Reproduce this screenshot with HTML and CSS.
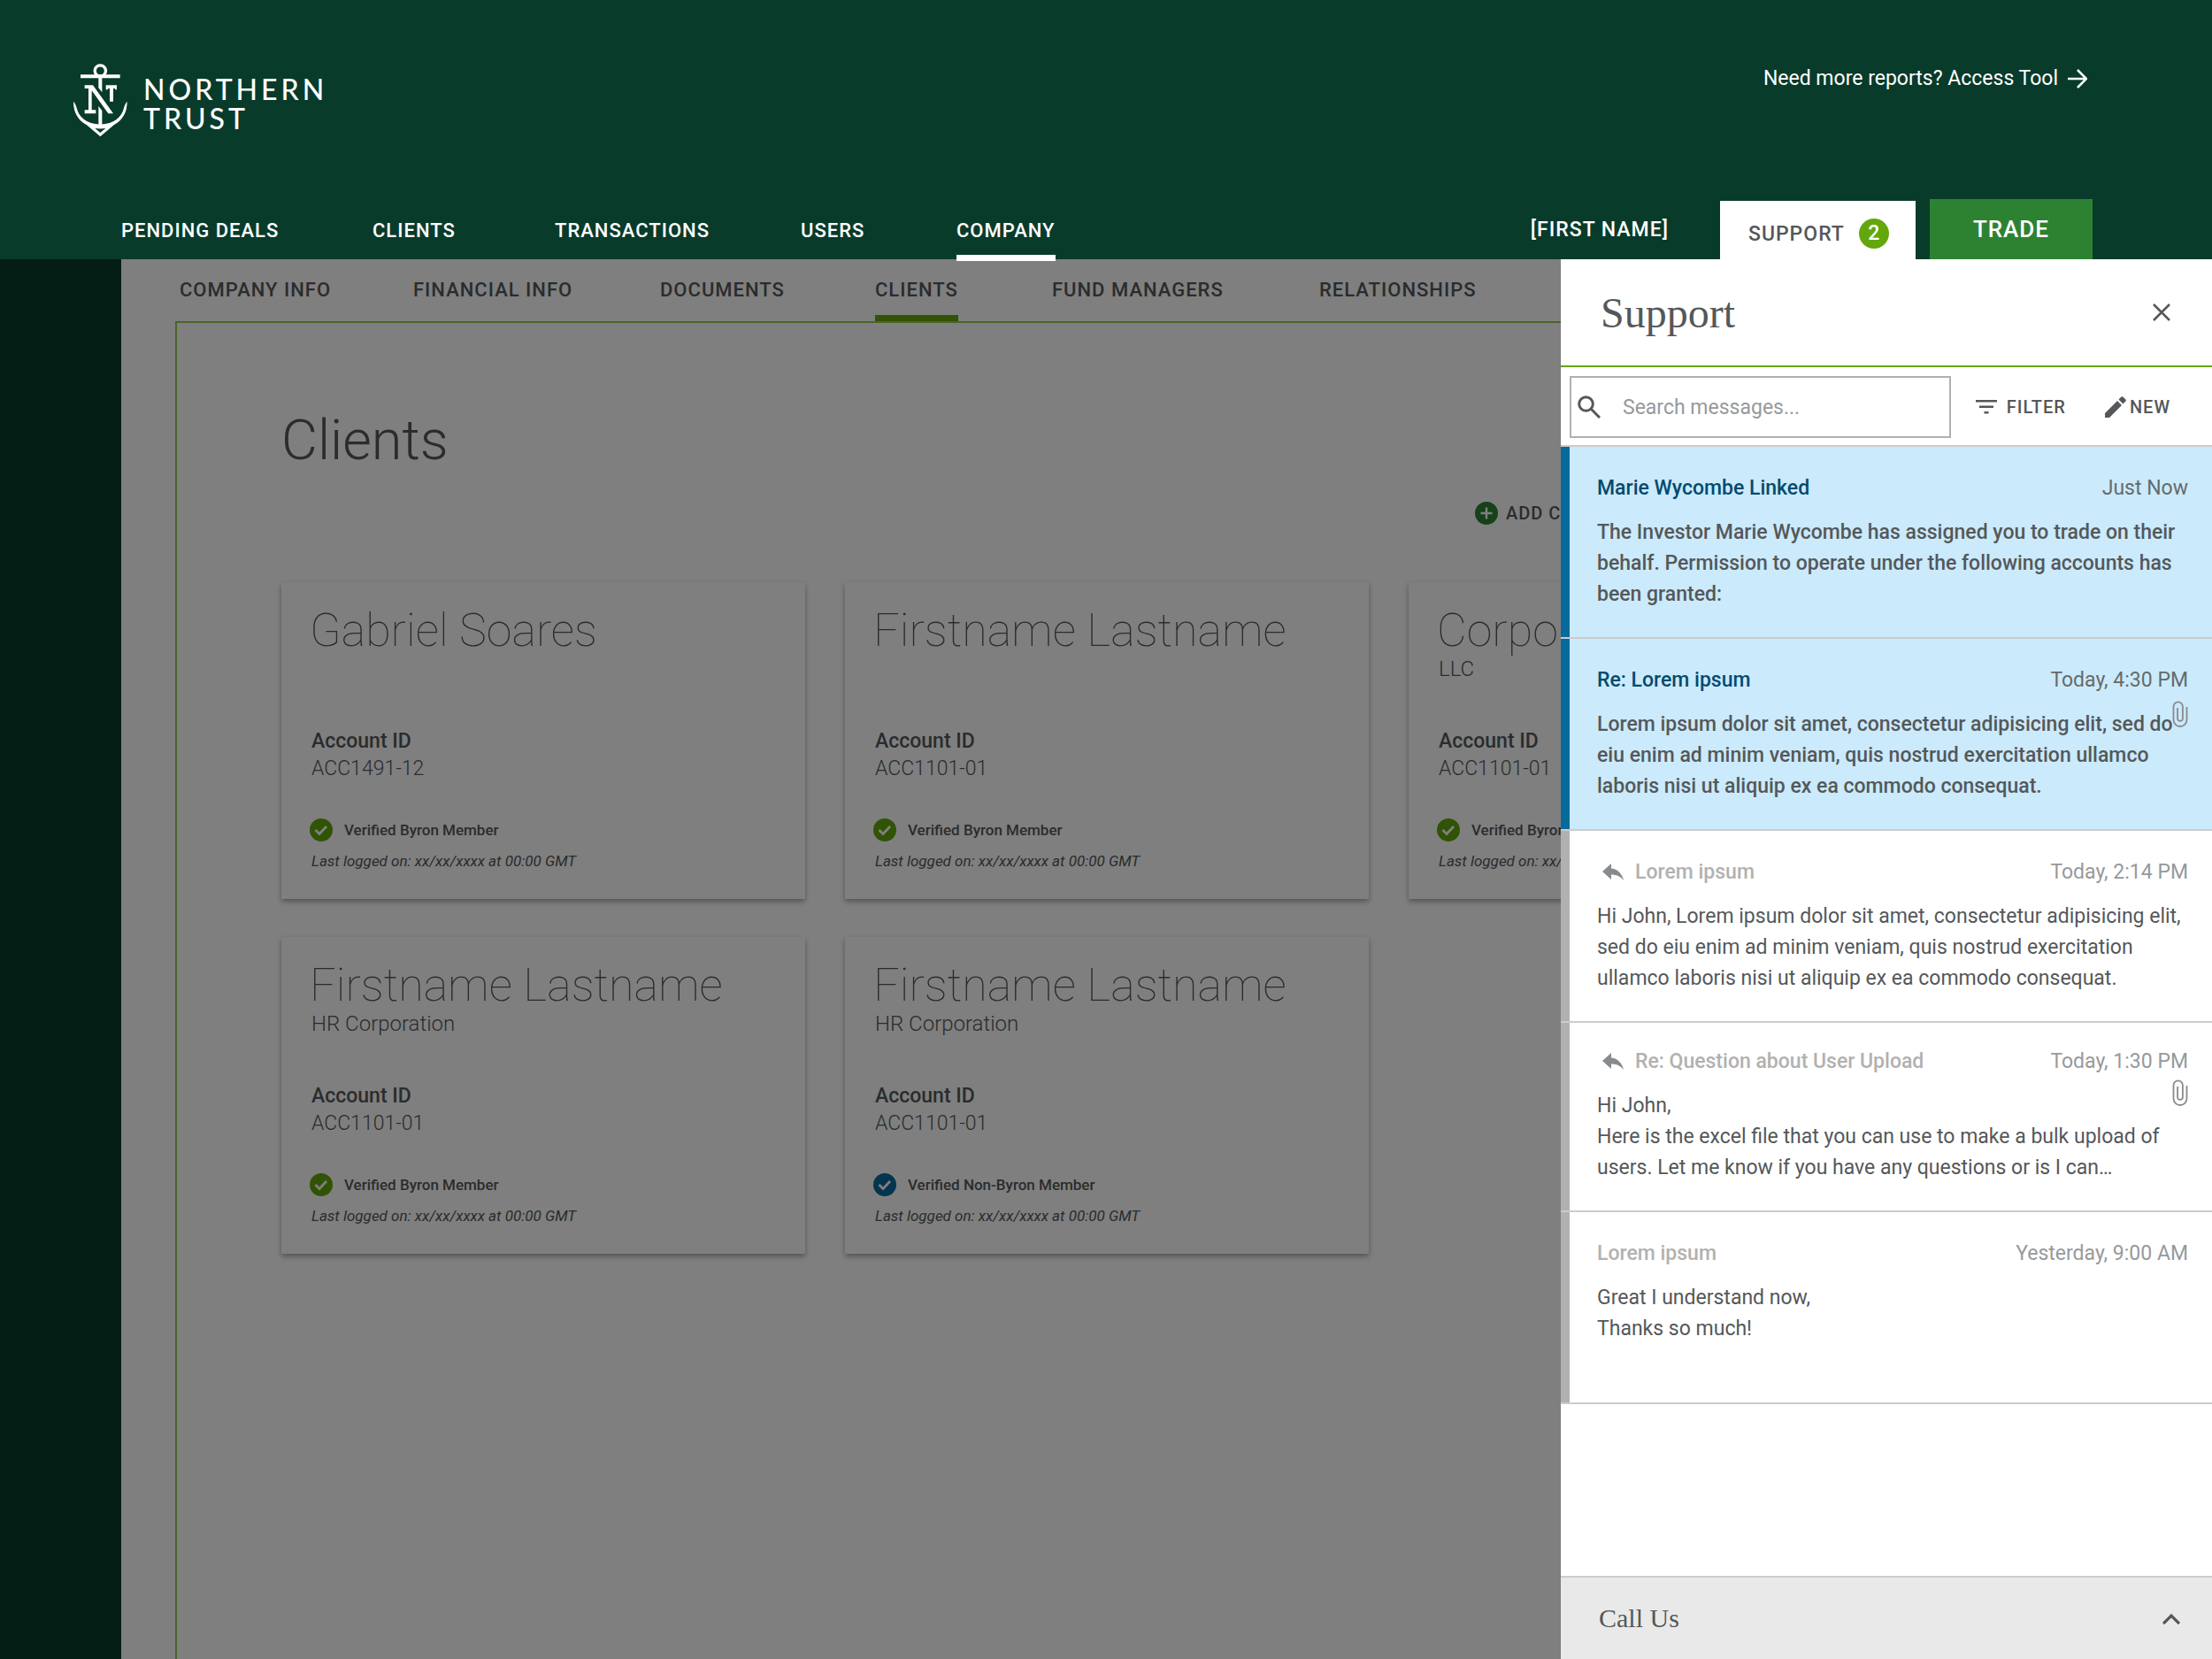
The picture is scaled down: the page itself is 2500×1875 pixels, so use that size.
FILE: index.html
```html
<!DOCTYPE html>
<html lang="en">
<head>
    <meta charset="UTF-8">
    <meta name="viewport" content="width=device-width, initial-scale=1.0">
    <title>Northern Trust - Clients</title>
    <link rel="stylesheet" href="styles.css">
</head>
<body>
    <!-- Shared icons -->
    <svg class="sprite" aria-hidden="true">
        <symbol id="icon-check" viewBox="0 0 26 26">
            <circle cx="13" cy="13" r="13" />
            <path d="M6.500 13l4.500 4.500 8-8.500" fill="none" stroke="#fff" stroke-width="2.800" />
        </symbol>
        <symbol id="icon-clip" viewBox="0 0 18 30">
            <path d="M16.500 7v14.500a7.500 7.500 0 0 1-15 0V6.500a5.200 5.200 0 0 1 10.400 0V20a2.900 2.900 0 0 1-5.800 0V8" fill="none" stroke="currentColor" stroke-width="1.800" />
        </symbol>
        <symbol id="icon-reply" viewBox="0 0 24 20">
            <path d="M10 5.500V0L0 9l10 9v-5.500c6 0 10.500 2 14 6.500-1.500-6.500-5.500-12.500-14-13.500z" fill="currentColor" />
        </symbol>
    </svg>

    <header class="header">
        <div class="header-top">
            <a class="logo" href="#">
                <svg class="logo-mark" viewBox="66 62 186 252" fill="#fff" aria-hidden="true">
                    <circle cx="160" cy="89" r="18.500" fill="none" stroke="#fff" stroke-width="10" />
                    <path d="M93 102h134v12H93z" />
                    <path d="M154 112h12v50l-12-15zM154 209l12 15v52h-12z" />
                    <path d="M107 138h28l69 96h-17l-56-78v66h14v12h-38v-12h13v-73h-13z" />
                    <path d="M179 138h37v15h-6v-4h-6v44h-12v-44h-6v4h-7z" />
                    <path d="M69 193c5 5 9 13 11 22 7 31 33 54 80 56 47-2 73-25 80-56 2-9 6-17 11-22 0 36-14 62-45 80l-46 39-46-39c-31-18-45-44-45-80z M142 284l18 15 18-15c-12 2-24 2-36 0z" fill-rule="evenodd" />
                </svg>
                <span class="logo-text">NORTHERN<br>TRUST</span>
            </a>
            <a class="tool-link" href="#">Need more reports? Access Tool
                <svg width="22" height="22" viewBox="0 0 22 22" fill="none" stroke="currentColor" stroke-width="2.500"><path d="M0 11h20M11 1l10 10-10 10" /></svg>
            </a>
        </div>
        <div class="header-bottom">
            <nav class="main-nav">
                <a href="#">PENDING DEALS</a>
                <a href="#">CLIENTS</a>
                <a href="#">TRANSACTIONS</a>
                <a href="#">USERS</a>
                <a href="#" class="active">COMPANY</a>
            </nav>
            <div class="user-nav">
                <a class="user-name" href="#">[FIRST NAME]</a>
                <button class="support-tab">SUPPORT <span class="badge">2</span></button>
                <button class="trade-button">TRADE</button>
            </div>
        </div>
    </header>

    <div class="workspace">
        <div class="page-view">
            <main class="page">
                <nav class="sub-nav">
                    <a href="#">COMPANY INFO</a>
                    <a href="#">FINANCIAL INFO</a>
                    <a href="#">DOCUMENTS</a>
                    <a href="#" class="active">CLIENTS</a>
                    <a href="#">FUND MANAGERS</a>
                    <a href="#">RELATIONSHIPS</a>
                </nav>
                <section class="content">
                    <h1>Clients</h1>
                    <div class="toolbar">
                        <button class="add-button">
                            <svg width="26" height="26" viewBox="0 0 26 26"><circle cx="13" cy="13" r="13" fill="#2d8232" /><path d="M13 6.500v13M6.500 13h13" stroke="#fff" stroke-width="2.500" /></svg>
                            ADD CLIENT
                        </button>
                    </div>
                    <div class="cards">
                        <article class="card">
                            <h2>Gabriel Soares</h2>
                            <p class="company"></p>
                            <p class="account-label">Account ID</p>
                            <p class="account-id">ACC1491-12</p>
                            <p class="status"><svg class="check"><use href="#icon-check" /></svg>Verified Byron Member</p>
                            <p class="last-login">Last logged on: xx/xx/xxxx at 00:00 GMT</p>
                        </article>
                        <article class="card">
                            <h2>Firstname Lastname</h2>
                            <p class="company"></p>
                            <p class="account-label">Account ID</p>
                            <p class="account-id">ACC1101-01</p>
                            <p class="status"><svg class="check"><use href="#icon-check" /></svg>Verified Byron Member</p>
                            <p class="last-login">Last logged on: xx/xx/xxxx at 00:00 GMT</p>
                        </article>
                        <article class="card">
                            <h2>Corporation</h2>
                            <p class="company">LLC</p>
                            <p class="account-label">Account ID</p>
                            <p class="account-id">ACC1101-01</p>
                            <p class="status"><svg class="check"><use href="#icon-check" /></svg>Verified Byron Member</p>
                            <p class="last-login">Last logged on: xx/xx/xxxx at 00:00 GMT</p>
                        </article>
                        <article class="card">
                            <h2>Firstname Lastname</h2>
                            <p class="company">HR Corporation</p>
                            <p class="account-label">Account ID</p>
                            <p class="account-id">ACC1101-01</p>
                            <p class="status"><svg class="check"><use href="#icon-check" /></svg>Verified Byron Member</p>
                            <p class="last-login">Last logged on: xx/xx/xxxx at 00:00 GMT</p>
                        </article>
                        <article class="card">
                            <h2>Firstname Lastname</h2>
                            <p class="company">HR Corporation</p>
                            <p class="account-label">Account ID</p>
                            <p class="account-id">ACC1101-01</p>
                            <p class="status"><svg class="check external"><use href="#icon-check" /></svg>Verified Non-Byron Member</p>
                            <p class="last-login">Last logged on: xx/xx/xxxx at 00:00 GMT</p>
                        </article>
                    </div>
                </section>
            </main>
            <div class="overlay"></div>
        </div>

        <!-- Support drawer -->
        <aside class="drawer">
            <div class="drawer-header">
                <h2>Support</h2>
                <button aria-label="Close">
                    <svg width="20" height="20" viewBox="0 0 20 20" stroke="currentColor" stroke-width="2.500"><path d="M1 1l18 18M19 1L1 19" /></svg>
                </button>
            </div>
            <div class="drawer-tools">
                <label class="search">
                    <svg width="26" height="26" viewBox="0 0 26 26" fill="none" stroke="currentColor" stroke-width="3"><circle cx="9.500" cy="9.500" r="7.800" /><path d="M15 15l10 10" /></svg>
                    <input type="text" placeholder="Search messages..." aria-label="Search messages">
                </label>
                <button class="filter">
                    <svg width="24" height="16" viewBox="0 0 24 16" fill="currentColor"><path d="M0 0h24v2.500H0zM4 6.500h16V9H4zM9.500 13h5v2.500h-5z" /></svg>
                    FILTER
                </button>
                <button class="new">
                    <svg width="24" height="24" viewBox="0 0 24 24" fill="currentColor"><path d="M0 19v5h5L19 10l-5-5zM23.400 5.600a1.500 1.500 0 0 0 0-2L20.400.6a1.500 1.500 0 0 0-2 0L15.500 3.500l5 5z" /></svg>
                    NEW
                </button>
            </div>
            <div class="messages">
                <article class="message unread">
                    <div class="message-head">
                        <h3>Marie Wycombe Linked</h3>
                        <time>Just Now</time>
                    </div>
                    <p>The Investor Marie Wycombe has assigned you to trade on their<br>behalf. Permission to operate under the following accounts has<br>been granted:</p>
                </article>
                <article class="message unread">
                    <div class="message-head">
                        <h3>Re: Lorem ipsum</h3>
                        <time>Today, 4:30 PM</time>
                    </div>
                    <svg class="clip"><use href="#icon-clip" /></svg>
                    <p>Lorem ipsum dolor sit amet, consectetur adipisicing elit, sed do<br>eiu enim ad minim veniam, quis nostrud exercitation ullamco<br>laboris nisi ut aliquip ex ea commodo consequat.</p>
                </article>
                <article class="message">
                    <div class="message-head">
                        <svg class="reply"><use href="#icon-reply" /></svg>
                        <h3>Lorem ipsum</h3>
                        <time>Today, 2:14 PM</time>
                    </div>
                    <p>Hi John, Lorem ipsum dolor sit amet, consectetur adipisicing elit,<br>sed do eiu enim ad minim veniam, quis nostrud exercitation<br>ullamco laboris nisi ut aliquip ex ea commodo consequat.</p>
                </article>
                <article class="message compact">
                    <div class="message-head">
                        <svg class="reply"><use href="#icon-reply" /></svg>
                        <h3>Re: Question about User Upload</h3>
                        <time>Today, 1:30 PM</time>
                    </div>
                    <svg class="clip"><use href="#icon-clip" /></svg>
                    <p>Hi John,<br>Here is the excel file that you can use to make a bulk upload of<br>users. Let me know if you have any questions or is I can…</p>
                </article>
                <article class="message">
                    <div class="message-head">
                        <h3>Lorem ipsum</h3>
                        <time>Yesterday, 9:00 AM</time>
                    </div>
                    <p>Great I understand now,<br>Thanks so much!</p>
                </article>
            </div>
            <button class="call-us">
                Call Us
                <svg width="20" height="13" viewBox="0 0 20 13" fill="none" stroke="currentColor" stroke-width="3.200"><path d="M1 12l9-9 9 9" /></svg>
            </button>
        </aside>
    </div>
</body>
</html>
```
FILE: styles.css
```css
* {
    margin: 0;
    padding: 0;
    box-sizing: border-box;
}
body {
    display: flex;
    flex-direction: column;
    min-height: 100vh;
    background: #093b2b;
    color: #54585a;
    font-family: Roboto, "Liberation Sans", sans-serif;
    font-size: 23px;
    overflow-x: hidden;
}
a {
    color: inherit;
    text-decoration: none;
}
button {
    border: none;
    background: none;
    color: inherit;
    font: inherit;
    cursor: pointer;
}
svg {
    display: block;
    flex-shrink: 0;
}
.sprite {
    position: absolute;
    width: 0;
    height: 0;
}

/* Header */
.header {
    position: relative;
    z-index: 2;
    color: white;
}
.header-top {
    display: flex;
    justify-content: space-between;
    align-items: flex-start;
    height: 225px;
    padding: 71px 141px 0 82px;
}
.logo {
    display: flex;
    gap: 18px;
}
.logo-mark {
    width: 62px;
    height: 84px;
}
.logo-text {
    padding-top: 13px;
    font-family: Lato, sans-serif;
    font-size: 32px;
    font-weight: 500;
    line-height: 33px;
    letter-spacing: 4px;
}
.tool-link {
    display: flex;
    align-items: center;
    gap: 11px;
    line-height: 36px;
}
.header-bottom {
    display: flex;
    justify-content: space-between;
    align-items: flex-end;
    padding: 0 135px 0 137px;
}
.main-nav {
    display: grid;
    grid-template-columns: 284px 206px 278px 176px auto;
    font-size: 22px;
    font-weight: 500;
    letter-spacing: 1px;
    line-height: 64px;
}
.main-nav .active {
    position: relative;
}
.main-nav .active::after {
    content: "";
    position: absolute;
    left: 0;
    right: 0;
    bottom: -2px;
    height: 7px;
    background: white;
}
.user-nav {
    display: flex;
    align-items: flex-end;
    font-weight: 500;
    letter-spacing: 1px;
}
.user-name {
    padding-right: 58px;
    line-height: 66px;
}
.support-tab {
    display: flex;
    align-items: center;
    gap: 16px;
    height: 66px;
    margin-right: 16px;
    padding: 8px 30px 0 32px;
    background: white;
    color: #54585a;
    letter-spacing: 1px;
}
.badge {
    width: 34px;
    border-radius: 50%;
    background: #63a70a;
    color: white;
    line-height: 34px;
    letter-spacing: 0;
}
.trade-button {
    height: 68px;
    padding: 0 49px;
    background: #2d8232;
    color: white;
    font-size: 26px;
    letter-spacing: 1px;
}

/* Page beside and under the drawer */
.workspace {
    display: flex;
    flex: 1;
}
.page-view {
    position: relative;
    display: flex;
    flex: 1;
    min-width: 0;
    overflow: hidden;
}
.page {
    display: flex;
    flex-direction: column;
    flex: 0 0 calc(100vw - 272px);
    margin-left: 137px;
    padding: 0 61px;
    background: white;
}
.sub-nav {
    display: grid;
    grid-template-columns: 264px 279px 243px 200px 302px auto;
    justify-content: start;
    padding-left: 5px;
    font-size: 22px;
    font-weight: 500;
    letter-spacing: 1px;
    line-height: 70px;
}
.sub-nav .active {
    position: relative;
    justify-self: start;
}
.sub-nav .active::after {
    content: "";
    position: absolute;
    left: 0;
    right: 0;
    bottom: 0;
    height: 7px;
    background: #63a70a;
}
.content {
    flex: 1;
    padding: 95px 118px 60px;
    border: 2px solid #92c84e;
    border-bottom: none;
}
h1 {
    font-size: 63px;
    font-weight: 300;
    line-height: 76px;
}
.toolbar {
    width: 517px;
    margin: 29px 0 63px auto;
}
.add-button {
    display: flex;
    align-items: center;
    gap: 9px;
    font-size: 20px;
    font-weight: 500;
    letter-spacing: 1px;
    line-height: 30px;
}
.cards {
    display: grid;
    grid-template-columns: repeat(3, 1fr);
    gap: 43px 45px;
}
.card {
    padding: 25px 32px 32px;
    background: white;
    box-shadow: 0 3px 6px rgba(0, 0, 0, 0.35);
}
.card h2 {
    font-size: 52px;
    font-weight: 100;
    line-height: 59px;
}
.company {
    min-height: 28px;
    margin-bottom: 52px;
    padding-left: 2px;
    font-size: 24px;
    font-weight: 300;
    line-height: 28px;
}
.account-label {
    padding-left: 2px;
    font-weight: 500;
    line-height: 31px;
}
.account-id {
    padding-left: 2px;
    font-weight: 300;
    line-height: 31px;
}
.status {
    display: flex;
    align-items: center;
    gap: 13px;
    margin-top: 41px;
    font-size: 17px;
    font-weight: 500;
    line-height: 26px;
}
.check {
    width: 26px;
    height: 26px;
    fill: #63a70a;
}
.check.external {
    fill: #086a9c;
}
.last-login {
    margin-top: 11px;
    padding-left: 2px;
    font-size: 17px;
    font-style: italic;
    line-height: 22px;
}
.overlay {
    position: absolute;
    inset: 0;
    background: rgba(0, 0, 0, 0.5);
}

/* Drawer */
.drawer {
    display: flex;
    flex-direction: column;
    flex: 0 0 736px;
    background: white;
}
.drawer-header {
    display: flex;
    justify-content: space-between;
    align-items: center;
    height: 122px;
    padding: 0 47px 0 45px;
    border-bottom: 2px solid #63a70a;
}
.drawer-header h2 {
    font-family: "Roboto Slab", "Liberation Serif", serif;
    font-size: 48px;
    font-weight: 300;
}
.drawer-tools {
    display: flex;
    align-items: center;
    padding: 10px 47px 8px 10px;
    border-bottom: 2px solid #ccc;
    font-weight: 500;
    font-size: 20px;
}
.search {
    display: flex;
    align-items: center;
    flex: 1;
    gap: 25px;
    height: 70px;
    padding-left: 7px;
    border: 2px solid #b0b0b0;
}
.search input {
    flex: 1;
    min-width: 0;
    border: none;
    outline: none;
    font: 400 23px Roboto, "Liberation Sans", sans-serif;
}
.search input::placeholder {
    color: #97999b;
}
.filter,
.new {
    display: flex;
    align-items: center;
    letter-spacing: 1px;
}
.filter {
    gap: 11px;
    margin: 0 44px 0 28px;
}
.new {
    gap: 4px;
}
.message {
    position: relative;
    min-height: 217px;
    padding: 29px 27px 31px 41px;
    border-bottom: 2px solid #ccc;
}
.message::before {
    content: "";
    position: absolute;
    left: 0;
    top: 0;
    bottom: 0;
    width: 10px;
    background: #b1b1b1;
}
.message.compact {
    min-height: 214px;
    padding-top: 26px;
}
.message-head {
    display: flex;
    align-items: center;
    margin-bottom: 15px;
    line-height: 35px;
}
.message h3 {
    color: #b1b1b1;
    font-size: 23px;
    font-weight: 500;
}
.message time {
    margin-left: auto;
    color: #97999b;
}
.message p {
    line-height: 35px;
}
.reply {
    width: 24px;
    height: 20px;
    margin: 0 13px 0 6px;
    color: #888b8d;
}
.clip {
    position: absolute;
    top: 70px;
    right: 27px;
    width: 18px;
    height: 30px;
    color: #888b8d;
}
.compact .clip {
    top: 64px;
}
.unread {
    background: #cbeafb;
}
.unread::before {
    background: #086a9c;
}
.unread h3 {
    color: #004b70;
}
.unread time {
    color: #666a6c;
}
.unread p {
    font-weight: 500;
}
.call-us {
    display: flex;
    justify-content: space-between;
    align-items: center;
    height: 94px;
    margin-top: auto;
    padding: 0 36px 0 43px;
    border-top: 2px solid #ccc;
    background: #e9e9e9;
    font-family: "Roboto Slab", "Liberation Serif", serif;
    font-size: 30px;
    font-weight: 300;
}
```
